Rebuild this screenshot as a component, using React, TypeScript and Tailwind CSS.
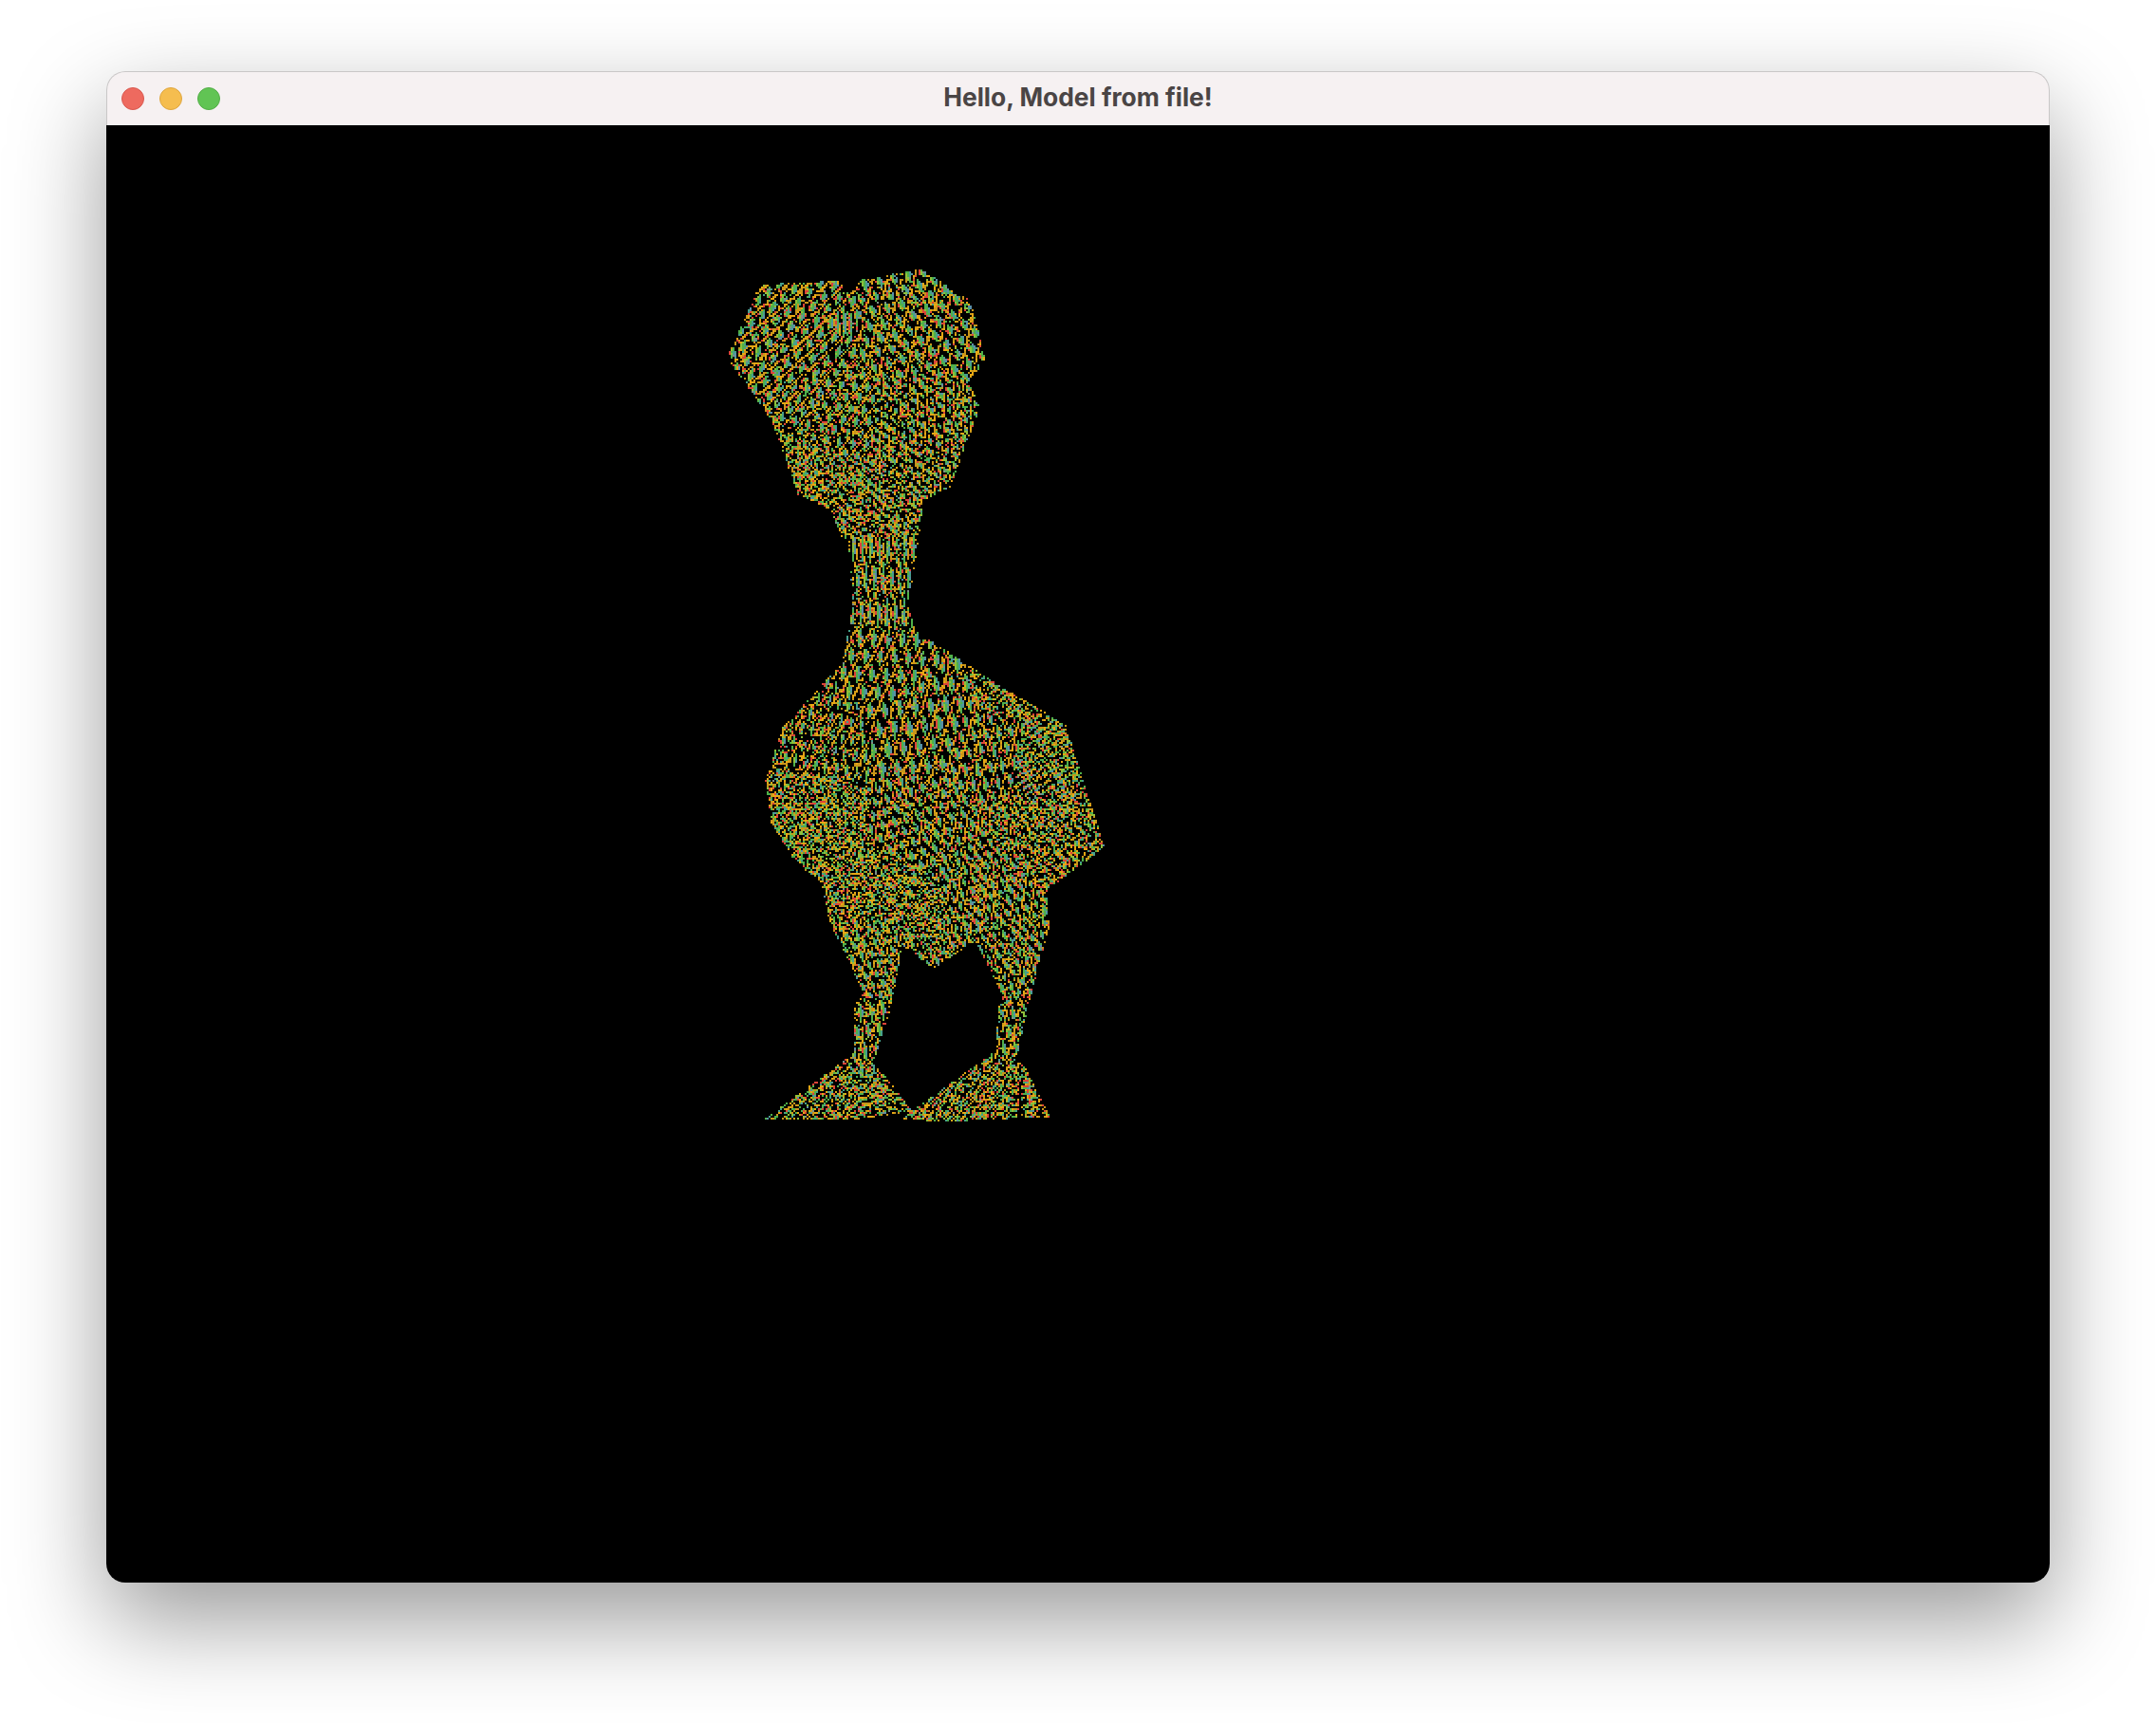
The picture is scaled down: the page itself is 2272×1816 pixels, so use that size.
import React, { useMemo } from 'react';

type Pt = [number, number];

// outline of the model, in page pixels
const HEAD: Pt[] = [[765,376],[800,299],[883,295],[894,310],[907,293],[970,283],[1023,317],[1037,378],[1020,403],[1032,428],[1000,513],[972,527],[968,560],[962,600],[956,637],[963,667],[895,667],[898,637],[895,600],[893,568],[886,568],[875,537],[840,520],[812,442]];
const BODY: Pt[] = [[898,637],[956,637],[963,663],[1050,720],[1122,763],[1163,892],[1102,937],[1105,975],[1088,1040],[1082,1062],[1070,1115],[1082,1128],[1105,1176],[997,1181],[950,1179],[960,1170],[920,1117],[938,1060],[943,1033],[950,995],[983,1020],[1027,990],[1053,1043],[1048,1107],[960,1170],[903,1179],[832,1180],[805,1178],[898,1110],[900,1060],[908,1043],[873,970],[865,930],[837,907],[812,867],[806,822],[823,767],[887,697]];

const PALETTE = ['#4fb04a', '#46a08c', '#5a8fa8', '#c9961a', '#e8a814', '#dd4438', '#8fc03a', '#7f8f88'];

type Patch = { x: number; y: number; w: number; a: number; sx: number; sy: number; k: number; n: number; curve?: boolean };

// each patch is one area of the moire: lattice angle, spacing, lozenge size and noise
const PATCHES: Patch[] = [
  { x: 840, y: 345, w: 1, a: 0.3, sx: 16, sy: 26, k: 0.55, n: 0.14, curve: true },
  { x: 965, y: 345, w: 1, a: -0.3, sx: 16, sy: 28, k: 0.55, n: 0.14, curve: true },
  { x: 885, y: 340, w: 0.28, a: 0, sx: 7, sy: 70, k: 0.75, n: 0.05 },
  { x: 880, y: 440, w: 0.9, a: 0.15, sx: 14, sy: 24, k: 0.55, n: 0.18, curve: true },
  { x: 965, y: 450, w: 1, a: -0.5, sx: 11, sy: 18, k: 0.52, n: 0.28 },
  { x: 850, y: 500, w: 1, a: 0.5, sx: 7, sy: 12, k: 0.5, n: 0.5 },
  { x: 925, y: 530, w: 0.8, a: -0.3, sx: 8, sy: 14, k: 0.55, n: 0.35 },
  { x: 925, y: 610, w: 1, a: 0.02, sx: 9, sy: 70, k: 0.58, n: 0.16 },
  { x: 925, y: 710, w: 1, a: 0.06, sx: 15, sy: 38, k: 0.55, n: 0.1 },
  { x: 965, y: 765, w: 1, a: -0.08, sx: 16, sy: 42, k: 0.55, n: 0.1 },
  { x: 860, y: 770, w: 1.1, a: 0.2, sx: 11, sy: 34, k: 0.48, n: 0.25 },
  { x: 1040, y: 790, w: 0.9, a: -0.12, sx: 13, sy: 34, k: 0.52, n: 0.14 },
  { x: 1105, y: 800, w: 0.9, a: 1.1, sx: 7, sy: 60, k: 0.6, n: 0.25 },
  { x: 1060, y: 735, w: 0.6, a: 0.9, sx: 6, sy: 50, k: 0.55, n: 0.4 },
  { x: 970, y: 870, w: 1, a: -0.3, sx: 13, sy: 26, k: 0.55, n: 0.16 },
  { x: 850, y: 860, w: 1.1, a: 0.3, sx: 7, sy: 12, k: 0.5, n: 0.6 },
  { x: 1095, y: 880, w: 1, a: -0.4, sx: 8, sy: 14, k: 0.5, n: 0.5 },
  { x: 1050, y: 930, w: 1, a: -0.3, sx: 11, sy: 22, k: 0.55, n: 0.2 },
  { x: 930, y: 945, w: 1.1, a: 0.1, sx: 7, sy: 12, k: 0.5, n: 0.6 },
  { x: 920, y: 1015, w: 1, a: -0.2, sx: 11, sy: 22, k: 0.55, n: 0.25 },
  { x: 1065, y: 1015, w: 1, a: -0.25, sx: 11, sy: 22, k: 0.55, n: 0.25 },
  { x: 920, y: 1085, w: 1, a: -0.12, sx: 12, sy: 40, k: 0.55, n: 0.2 },
  { x: 1068, y: 1085, w: 1, a: -0.1, sx: 13, sy: 36, k: 0.5, n: 0.3 },
  { x: 860, y: 1155, w: 1, a: 0.8, sx: 7, sy: 34, k: 0.5, n: 0.4 },
  { x: 930, y: 1160, w: 0.7, a: 1.3, sx: 7, sy: 50, k: 0.55, n: 0.35 },
  { x: 1030, y: 1155, w: 1, a: 0.65, sx: 7, sy: 34, k: 0.5, n: 0.35 },
  { x: 1085, y: 1160, w: 0.6, a: 1.35, sx: 6, sy: 50, k: 0.55, n: 0.3 },
];

const inside = (px: number, py: number, poly: Pt[]) => {
  let hit = false;
  for (let i = 0, j = poly.length - 1; i < poly.length; j = i++) {
    const [xi, yi] = poly[i];
    const [xj, yj] = poly[j];
    if (yi > py !== yj > py && px < ((xj - xi) * (py - yi)) / (yj - yi) + xi) hit = !hit;
  }
  return hit;
};

const frac = (v: number) => v - Math.floor(v);

const buildPixels = () => {
  const paths: string[] = PALETTE.map(() => '');
  let seed = 1234567;
  const rnd = () => {
    seed = (seed * 1664525 + 1013904223) >>> 0;
    return seed / 4294967296;
  };
  for (let y = 282; y < 1182; y += 2) {
    for (let x = 764; x < 1166; x += 2) {
      if (!inside(x, y, HEAD) && !inside(x, y, BODY)) continue;
      let best = PATCHES[0];
      let bestD = Infinity;
      for (const p of PATCHES) {
        const d = Math.hypot(x - p.x, y - p.y) / p.w;
        if (d < bestD) {
          bestD = d;
          best = p;
        }
      }
      const bend = best.curve ? ((x - best.x) * (x - best.x)) / 700 : 0;
      const dx = x - best.x;
      const dy = y - best.y + bend;
      const a = (dx * Math.cos(best.a) + dy * Math.sin(best.a)) / best.sx;
      const b = (-dx * Math.sin(best.a) + dy * Math.cos(best.a)) / best.sy;
      // two crossing wave fronts make the staggered lozenges
      const u = frac(a + b);
      const v = frac(a - b);
      const inLozenge = Math.abs(u - 0.5) < best.k / 2 && Math.abs(v - 0.5) < best.k / 2;
      let colour = -1;
      if (rnd() < best.n) {
        const r = rnd();
        if (r < 0.28) colour = rnd() < 0.5 ? 3 : 4;
        else if (r < 0.36) colour = 5;
        else if (r < 0.66) colour = rnd() < 0.5 ? 0 : rnd() < 0.5 ? 6 : 1;
      } else if (inLozenge) {
        // warm edge, then green, then teal
        const t = (u + v - 1) / best.k + rnd() * 0.3 - 0.15;
        colour = t < -0.55 ? 5 : t < -0.25 ? 6 : t < 0.2 ? 0 : t < 0.55 ? 1 : 2;
        if (rnd() < 0.06) colour = 7;
      } else {
        // between lozenges: black with thin orange strokes
        const r = rnd();
        const edge = Math.min(u, 1 - u) < 0.1;
        if (r < (edge ? 0.72 : 0.08)) colour = rnd() < 0.6 ? 3 : 4;
        else if (r < (edge ? 0.8 : 0.12)) colour = 5;
      }
      if (colour >= 0) paths[colour] += `M${x} ${y}h2v2h-2z`;
    }
  }
  return paths;
};

const ModelView: React.FC = () => {
  const paths = useMemo(buildPixels, []);
  return (
    <svg viewBox="112 132 2048 1536" className="block w-full h-full" shapeRendering="crispEdges">
      {paths.map((d, i) => (
        <path key={i} d={d} fill={PALETTE[i]} />
      ))}
    </svg>
  );
};

const App: React.FC = () => {
  return (
    <div className="min-h-[1816px] bg-white pt-[75px]">
      <div className="mx-auto w-[2048px] rounded-[20px] shadow-[0_40px_100px_0_rgba(0,0,0,0.4)]">
        <div className="grid h-[57px] grid-cols-[1fr_auto_1fr] items-center rounded-t-[20px] border-t border-x border-[#c9c7c7] bg-[#f6f1f2] px-[15px]">
          <div className="flex gap-[16px]">
            <span className="h-[24px] w-[24px] rounded-full border border-[#d9584f] bg-[#ee6a5f]" />
            <span className="h-[24px] w-[24px] rounded-full border border-[#dfa63f] bg-[#f5bd4f]" />
            <span className="h-[24px] w-[24px] rounded-full border border-[#53ae47] bg-[#61c454]" />
          </div>
          <div className="mb-[2px] font-['Inter',sans-serif] text-[26.4px] font-bold text-[#4a4545]">Hello, Model from file!</div>
          <div />
        </div>
        <div className="h-[1536px] overflow-hidden rounded-b-[20px] bg-black">
          <ModelView />
        </div>
      </div>
    </div>
  );
};

export default App;
